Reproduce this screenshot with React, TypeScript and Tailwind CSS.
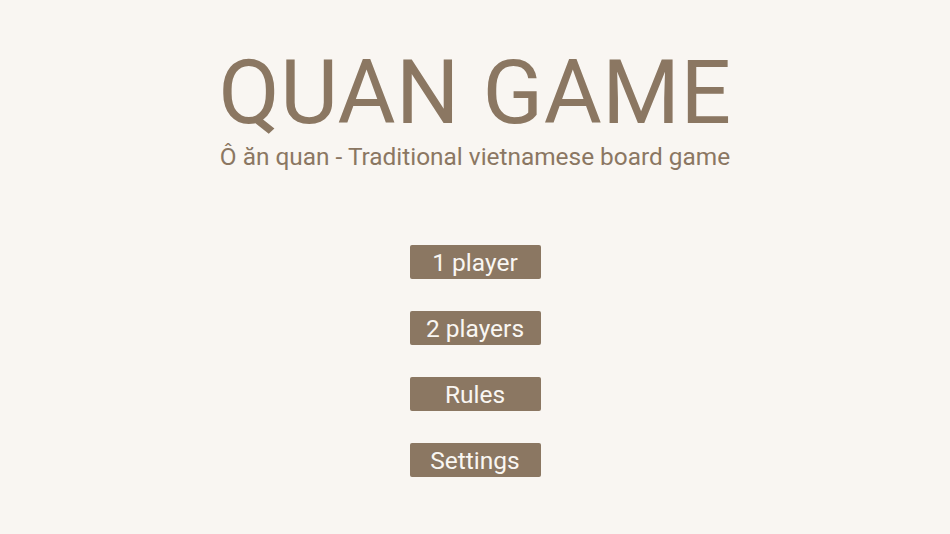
export default function App() {
  const items = ["1 player", "2 players", "Rules", "Settings"];
  return (
    <div
      className="flex h-[534px] w-[950px] flex-col items-center bg-[#f9f6f2] text-[#8b7762]"
      style={{ fontFamily: "Roboto, 'Noto Sans', sans-serif" }}
    >
      <h1 className="mt-[48px] text-[89px] leading-[89px] tracking-[0.5px]">QUAN GAME</h1>
      <p className="mt-[5px] text-[24.4px] leading-[30px]">
        Ô ăn quan - Traditional vietnamese board game
      </p>
      <div className="mt-[73px] flex flex-col gap-[32px]">
        {items.map((t) => (
          <button
            key={t}
            className="h-[34px] w-[131px] rounded-[2px] bg-[#8b7762] pt-[1px] text-[24.5px] leading-[33px] text-[#f9f6f2]"
          >
            {t}
          </button>
        ))}
      </div>
    </div>
  );
}
